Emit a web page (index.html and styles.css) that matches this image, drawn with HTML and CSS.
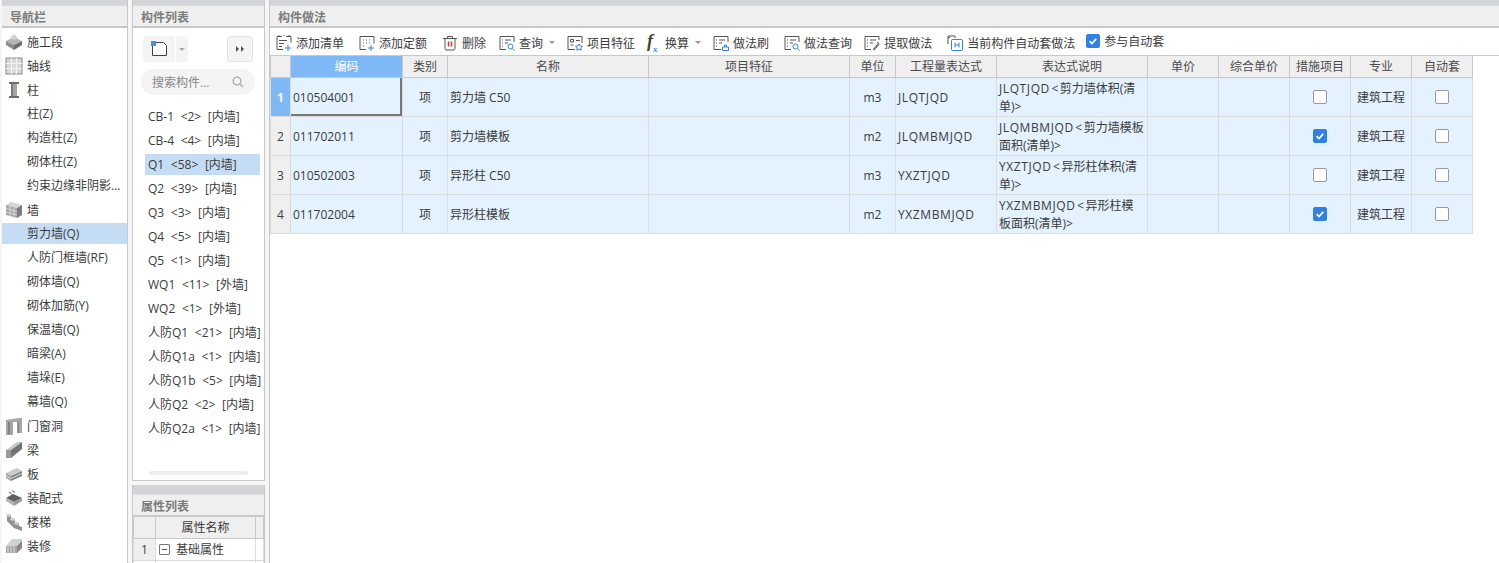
FILE: index.html
```html
<!DOCTYPE html>
<html lang="zh-CN">
<head>
  <meta charset="UTF-8" />
  <title>构件做法</title>
  <link rel="stylesheet" href="styles.css">
</head>
<body>
  <div class="app">
    <!-- 导航栏 -->
    <section class="panel nav">
      <div class="strip"></div>
      <div class="panel-title">导航栏</div>
      <ul class="nav-list">
        <li class="nav-item"><svg class="nav-icon" viewBox="0 0 18 18"><path d="M1 8l8-4 8 4-8 4z" fill="#b5b5b5"/><path d="M1 8v4l8 5v-5z" fill="#8c8c8c"/><path d="M17 8v4l-8 5v-5z" fill="#6f6f6f"/><path d="M5 5l4-4 4 4-4 2z" fill="#d0d0d0"/></svg>施工段</li>
        <li class="nav-item"><svg class="nav-icon" viewBox="0 0 18 18"><rect x="1" y="1" width="16" height="16" fill="#d8d8d8" stroke="#8a8a8a"/><path d="M6.500 1v16M11.500 1v16M1 6.500h16M1 11.500h16" stroke="#f4f4f4" stroke-width="1.200"/></svg>轴线</li>
        <li class="nav-item"><svg class="nav-icon" viewBox="0 0 18 18"><path d="M4 1h10v2h-10zM4 15h10v2h-10z" fill="#6e6e6e"/><path d="M6 3h6v12h-6z" fill="#a5a5a5"/><path d="M6 3h2v12h-2z" fill="#7b7b7b"/></svg>柱</li>
        <li class="nav-item sub">柱(Z)</li>
        <li class="nav-item sub">构造柱(Z)</li>
        <li class="nav-item sub">砌体柱(Z)</li>
        <li class="nav-item sub">约束边缘非阴影...</li>
        <li class="nav-item"><svg class="nav-icon" viewBox="0 0 18 18"><path d="M1 4l5-3 11 3-5 3z" fill="#d6d6d6"/><path d="M1 4l11 3v10l-11-3z" fill="#a8a8a8"/><path d="M12 7l5-3v10l-5 3z" fill="#7d7d7d"/><path d="M1 7.500l11 3M1 11l11 3M5 5v10M9 6.500v10" stroke="#dedede" stroke-width=".8"/></svg>墙</li>
        <li class="nav-item sub active">剪力墙(Q)</li>
        <li class="nav-item sub">人防门框墙(RF)</li>
        <li class="nav-item sub">砌体墙(Q)</li>
        <li class="nav-item sub">砌体加筋(Y)</li>
        <li class="nav-item sub">保温墙(Q)</li>
        <li class="nav-item sub">暗梁(A)</li>
        <li class="nav-item sub">墙垛(E)</li>
        <li class="nav-item sub">幕墙(Q)</li>
        <li class="nav-item"><svg class="nav-icon" viewBox="0 0 18 18"><path d="M1 3l13-2h3v15h-4v-11h-5v13h-7z" fill="#a6a6a6"/><path d="M4 5v12M13 5v11" stroke="#787878" stroke-width="1.500"/></svg>门窗洞</li>
        <li class="nav-item"><svg class="nav-icon" viewBox="0 0 18 18"><path d="M1 9l11-8h5l-11 8z" fill="#c9c9c9"/><path d="M1 9h5v8h-5z" fill="#9a9a9a"/><path d="M6 9l11-8v7l-11 9z" fill="#737373"/></svg>梁</li>
        <li class="nav-item"><svg class="nav-icon" viewBox="0 0 18 18"><path d="M1 8l11-5 5 3-11 5z" fill="#cbcbcb"/><path d="M1 8l5 3v5l-5-3z" fill="#a0a0a0"/><path d="M6 11l11-5v5l-11 5z" fill="#808080"/><path d="M1 10.500l5 3 11-5" stroke="#e2e2e2" fill="none"/></svg>板</li>
        <li class="nav-item"><svg class="nav-icon" viewBox="0 0 18 18"><path d="M1 9l7-4 9 4-8 4z" fill="#5f5f5f"/><path d="M1 9v3l8 5v-4z" fill="#b4b4b4"/><path d="M17 9v3l-8 5v-4z" fill="#9a9a9a"/><path d="M4 3l3 2M7 1.500l3 2" stroke="#8a8a8a" stroke-width="1.200"/></svg>装配式</li>
        <li class="nav-item"><svg class="nav-icon" viewBox="0 0 18 18"><path d="M2 1l4 1v3l4 1v3l4 1v3l3 1v4l-8-3-7-7z" fill="#929292"/><path d="M2 1l4 1-1 2-4-1zM6 5l4 1-1 2-4-1zM10 9l4 1-1 2-4-1z" fill="#d4d4d4"/></svg>楼梯</li>
        <li class="nav-item"><svg class="nav-icon" viewBox="0 0 18 18"><path d="M1 9l6-7h10v7z" fill="#d2d2d2"/><path d="M1 9h11v7h-11z" fill="#a3a3a3"/><path d="M12 9l5-5v7l-5 5z" fill="#868686"/><path d="M3 9v7M6 9v7M9 9v7" stroke="#dcdcdc"/></svg>装修</li>
      </ul>
    </section>

    <div class="middle">
      <!-- 构件列表 -->
      <section class="panel comp">
        <div class="strip"></div>
        <div class="panel-title">构件列表</div>
        <div class="comp-tools">
          <div class="new-btn">
            <span class="new-main"><svg width="16" height="16" viewBox="0 0 16 16"><path d="M1.500 4v10.500h14v-10l-3-3h-8" fill="#fff" stroke="#444"/><rect x="0" y="0" width="5" height="5" fill="#4a8fe0"/></svg></span>
            <span class="new-caret"></span>
          </div>
          <span class="more-btn"><i></i><i></i></span>
        </div>
        <div class="search">
          <span>搜索构件...</span>
          <svg width="12" height="12" viewBox="0 0 12 12"><circle cx="5" cy="5" r="3.800" fill="none" stroke="#aaa" stroke-width="1.300"/><path d="M8 8l3 3" stroke="#aaa" stroke-width="1.300"/></svg>
        </div>
        <ul class="comp-list">
          <li>CB-1 &lt;2&gt; [内墙]</li>
          <li>CB-4 &lt;4&gt; [内墙]</li>
          <li class="active">Q1 &lt;58&gt; [内墙]</li>
          <li>Q2 &lt;39&gt; [内墙]</li>
          <li>Q3 &lt;3&gt; [内墙]</li>
          <li>Q4 &lt;5&gt; [内墙]</li>
          <li>Q5 &lt;1&gt; [内墙]</li>
          <li>WQ1 &lt;11&gt; [外墙]</li>
          <li>WQ2 &lt;1&gt; [外墙]</li>
          <li>人防Q1 &lt;21&gt; [内墙]</li>
          <li>人防Q1a &lt;1&gt; [内墙]</li>
          <li>人防Q1b &lt;5&gt; [内墙]</li>
          <li>人防Q2 &lt;2&gt; [内墙]</li>
          <li>人防Q2a &lt;1&gt; [内墙]</li>
        </ul>
        <div class="scroll-h"></div>
      </section>

      <!-- 属性列表 -->
      <section class="panel props">
        <div class="strip"></div>
        <div class="panel-title">属性列表</div>
        <table class="prop-table">
          <colgroup><col class="p-num"><col class="p-name"><col></colgroup>
          <thead><tr><th></th><th>属性名称</th><th></th></tr></thead>
          <tbody>
            <tr><td class="p-index">1</td><td><span class="minus"></span>基础属性</td><td></td></tr>
            <tr><td></td><td></td><td></td></tr>
          </tbody>
        </table>
      </section>
    </div>

    <!-- 构件做法 -->
    <section class="panel work">
      <div class="strip"></div>
      <div class="panel-title">构件做法</div>
      <div class="toolbar">
        <span class="tool"><svg class="tool-icon" viewBox="0 0 16 16"><path d="M6 1.500h-5v13h6M10 1.500h5v6" class="ln"/><path d="M3 1v-1M8 1v-1M13 1v-1M3 5.500h8M3 8.500h5M3 11.500h3" class="ln"/><path d="M12 10v6M9 13h6" class="bl"/></svg>添加清单</span>
        <span class="tool"><svg class="tool-icon" viewBox="0 0 16 16"><path d="M7 14.500h-6v-13h14v7" class="ln"/><path d="M4 5h1M7 5h1M10 5h1M4 8h1M7 8h1M10 8h1M4 11h1" class="ln"/><path d="M12 10v6M9 13h6" class="bl"/></svg>添加定额</span>
        <span class="tool"><svg class="tool-icon" viewBox="0 0 16 16"><path d="M1 3.500h14M5.500 3.500v-2h5v2M3 3.500v10l1 1.500h8l1-1.500v-10" class="ln"/><path d="M6.500 6.500v5M9.500 6.500v5" class="rd"/></svg>删除</span>
        <span class="tool query"><svg class="tool-icon" viewBox="0 0 16 16"><path d="M15 7v-5.500h-14v13h6" class="ln"/><path d="M3 5h1M6 5h6M3 8h1M6 8h3M3 11h1" class="ln"/><circle cx="11.500" cy="11.500" r="2.500" class="bl"/><path d="M13.500 13.500l2 2" class="bl"/></svg>查询<i class="caret"></i></span>
        <span class="tool narrow"><svg class="tool-icon" viewBox="0 0 16 16"><path d="M15 8v-6.500h-14v13h7" class="ln"/><path d="M3.500 4.500h3v2.500h-3zM3.500 10h3M9 5.500h4" class="ln"/><path d="M12 9l1.200 2 2.300.3-1.700 1.600.4 2.300-2.200-1.100-2.200 1.100.4-2.300-1.700-1.600 2.300-.3z" class="bl"/></svg>项目特征</span>
        <span class="tool narrow"><span class="fx-icon">f<sub>x</sub></span>换算<i class="caret"></i></span>
        <span class="tool narrow"><svg class="tool-icon" viewBox="0 0 16 16"><path d="M15 7v-5.500h-14v13h7" class="ln"/><path d="M3 5h1M6 5h6M3 8h1M6 8h3M3 11h1" class="ln"/><path d="M9.500 15.500v-3.500h6v3.500zM11.500 12v-2h2v2" class="bl"/></svg>做法刷</span>
        <span class="tool"><svg class="tool-icon" viewBox="0 0 16 16"><path d="M15 7v-5.500h-14v13h6" class="ln"/><path d="M3 5h1M6 5h6M3 8h1M6 8h3M3 11h1" class="ln"/><circle cx="11.500" cy="11.500" r="2.500" class="bl"/><path d="M13.500 13.500l2 2" class="bl"/></svg>做法查询</span>
        <span class="tool narrow"><svg class="tool-icon" viewBox="0 0 16 16"><path d="M15 5v-3.500h-14v13h6" class="ln"/><path d="M3 5h1M6 5h6M3 8h1M6 8h3M3 11h1" class="ln"/><path d="M9.500 15l5-6" stroke="#777" stroke-width="2"/><path d="M13 7l2.500 2" class="ln"/></svg>提取做法</span>
        <span class="tool"><svg class="tool-icon" viewBox="0 0 16 16"><path d="M1 9v-6.500h2M1 2.500v-1.500h7v2" class="ln"/><rect x="4.500" y="4.500" width="11" height="11" rx="1" class="bl"/><path d="M8 7.500v5M12 7.500v5M8 10h4" class="bl"/></svg>当前构件自动套做法</span>
        <label class="tool auto"><span class="check on"><svg viewBox="0 0 14 14"><path d="M3 7.200l2.800 2.800 5-5.500" fill="none" stroke="#fff" stroke-width="2"/></svg></span>参与自动套</label>
      </div>
      <table class="grid">
        <colgroup>
          <col class="c-num"><col class="c-code"><col class="c-type"><col class="c-name"><col class="c-feat">
          <col class="c-unit"><col class="c-expr"><col class="c-desc"><col class="c-price"><col class="c-price">
          <col class="c-flag"><col class="c-flag"><col class="c-flag">
        </colgroup>
        <thead>
          <tr>
            <th></th><th class="sel">编码</th><th>类别</th><th>名称</th><th>项目特征</th><th>单位</th><th>工程量表达式</th>
            <th>表达式说明</th><th>单价</th><th>综合单价</th><th>措施项目</th><th>专业</th><th>自动套</th>
          </tr>
        </thead>
        <tbody>
          <tr>
            <td class="num sel">1</td><td class="current">010504001</td><td class="mid">项</td><td>剪力墙 C50</td><td></td><td class="mid">m3</td><td><span class="code">JLQTJQD</span></td>
            <td><span class="code">JLQTJQD</span><span class="lt">&lt;</span>剪力墙体积(清<br>单)&gt;</td><td></td><td></td><td class="mid"><span class="check"></span></td><td class="mid">建筑工程</td><td class="mid"><span class="check"></span></td>
          </tr>
          <tr>
            <td class="num">2</td><td>011702011</td><td class="mid">项</td><td>剪力墙模板</td><td></td><td class="mid">m2</td><td><span class="code">JLQMBMJQD</span></td>
            <td><span class="code">JLQMBMJQD</span><span class="lt">&lt;</span>剪力墙模板<br>面积(清单)&gt;</td><td></td><td></td><td class="mid"><span class="check on"><svg viewBox="0 0 14 14"><path d="M3 7.200l2.800 2.800 5-5.500" fill="none" stroke="#fff" stroke-width="2"/></svg></span></td><td class="mid">建筑工程</td><td class="mid"><span class="check"></span></td>
          </tr>
          <tr>
            <td class="num">3</td><td>010502003</td><td class="mid">项</td><td>异形柱 C50</td><td></td><td class="mid">m3</td><td><span class="code">YXZTJQD</span></td>
            <td><span class="code">YXZTJQD</span><span class="lt">&lt;</span>异形柱体积(清<br>单)&gt;</td><td></td><td></td><td class="mid"><span class="check"></span></td><td class="mid">建筑工程</td><td class="mid"><span class="check"></span></td>
          </tr>
          <tr>
            <td class="num">4</td><td>011702004</td><td class="mid">项</td><td>异形柱模板</td><td></td><td class="mid">m2</td><td><span class="code">YXZMBMJQD</span></td>
            <td><span class="code">YXZMBMJQD</span><span class="lt">&lt;</span>异形柱模<br>板面积(清单)&gt;</td><td></td><td></td><td class="mid"><span class="check on"><svg viewBox="0 0 14 14"><path d="M3 7.200l2.800 2.800 5-5.500" fill="none" stroke="#fff" stroke-width="2"/></svg></span></td><td class="mid">建筑工程</td><td class="mid"><span class="check"></span></td>
          </tr>
        </tbody>
      </table>
    </section>
  </div>
</body>
</html>
```

FILE: styles.css
```css
:root {
  --strip: #d3d4d8;
  --title: #efefef;
  --line: #c8c8c8;
  --cell: #dcdcdc;
  --row: #e3f2fe;
  --selected: #c5dcf5;
  --blue: #7eb8f7;
  --check: #2f80e7;
  --text: #3c3c3c;
}

* {
  box-sizing: border-box;
}

html, body {
  height: 100%;
}

body {
  margin: 0;
  background: #f6f6f6;
  color: var(--text);
  font-family: "Open Sans", "Noto Sans CJK SC", sans-serif;
  font-size: 12px;
  overflow: hidden;
}

ul {
  list-style: none;
  margin: 0;
  padding: 0;
}

.app {
  display: flex;
  height: 563px;
  padding-left: 2px;
}

.panel {
  background: #fff;
  display: flex;
  flex-direction: column;
  overflow: hidden;
}

.strip {
  flex: none;
  height: 5px;
  background: var(--strip);
}

.panel-title {
  flex: none;
  height: 23px;
  line-height: 23px;
  padding-left: 8px;
  background: var(--title);
  border-top: 1px solid #dcdcdc;
  border-bottom: 2px solid var(--line);
  color: #7c7c7c;
  font-weight: 700;
}

/* 导航栏 */
.nav {
  width: 126px;
  border-right: 1px solid var(--line);
}

.nav-list {
  padding-top: 3px;
}

.nav-item {
  display: flex;
  align-items: center;
  height: 21px;
  margin-bottom: 3px;
  padding-left: 3px;
  font-size: 12px;
  white-space: nowrap;
}

.nav-item.sub {
  padding: 0 0 2px 25px;
}

.nav-item.active {
  background: var(--selected);
}

.nav-icon {
  width: 18px;
  height: 18px;
  margin-right: 4px;
  flex: none;
}

/* 中间一列 */
.middle {
  width: 133px;
  margin-left: 4px;
  display: flex;
  flex-direction: column;
  gap: 4px;
}

.comp {
  flex: none;
  height: 481px;
  border-left: 1px solid var(--line);
  border-right: 1px solid var(--line);
  border-bottom: 1px solid var(--line);
}

.comp-tools {
  flex: none;
  display: flex;
  justify-content: space-between;
  padding: 8px 11px 0 10px;
  height: 34px;
}

.new-btn {
  display: flex;
  height: 26px;
  gap: 1px;
}

.new-main {
  width: 32px;
  background: #f4f4f4;
  border-radius: 4px 0 0 4px;
  display: flex;
  align-items: center;
  justify-content: center;
}

.new-caret {
  width: 12px;
  background: #f4f4f4;
  border-radius: 0 4px 4px 0;
  position: relative;
}

.new-caret::after {
  content: "";
  position: absolute;
  left: 3px;
  top: 12px;
  border: 3px solid transparent;
  border-top: 3px solid #aaa;
}

.more-btn {
  width: 26px;
  height: 26px;
  background: #f4f4f4;
  border: 1px solid #e2e2e2;
  border-radius: 4px;
  display: flex;
  align-items: center;
  justify-content: center;
  gap: 2px;
}

.more-btn i {
  border-left: 3px solid #555;
  border-top: 3px solid transparent;
  border-bottom: 3px solid transparent;
}

.search {
  flex: none;
  margin: 7px 9px 0 8px;
  height: 26px;
  background: #f4f4f4;
  border-radius: 13px;
  display: flex;
  align-items: center;
  justify-content: space-between;
  padding: 0 11px;
  color: #888;
}

.comp-list {
  flex: 1;
  margin-top: 11px;
  padding-left: 12px;
  overflow: hidden;
}

.comp-list li {
  height: 21px;
  line-height: 21px;
  margin-bottom: 3px;
  padding-left: 3px;
  white-space: pre;
  word-spacing: 3.500px;
  overflow: hidden;
}

.comp-list li.active {
  background: var(--selected);
  width: 115px;
}

.scroll-h {
  flex: none;
  width: 99px;
  height: 4px;
  margin: 0 0 5px 16px;
  background: #eeeeee;
  border-radius: 2px;
}

.props {
  flex: 1;
  border-left: 1px solid var(--line);
  border-right: 1px solid var(--line);
}

.props .strip {
  height: 9px;
}

.prop-table {
  width: 100%;
  table-layout: fixed;
  border-collapse: collapse;
}

.p-num {
  width: 22px;
}

.p-name {
  width: 100px;
}

.prop-table th {
  height: 21px;
  background: var(--title);
  border: 1px solid var(--line);
  border-top: 0;
  font-weight: 400;
  padding: 0;
}

.prop-table td {
  height: 22px;
  border: 1px solid var(--cell);
  padding: 0 0 0 3px;
  white-space: nowrap;
}

.p-index {
  background: var(--title);
  text-align: center;
}

td.p-index {
  padding: 0;
}

.minus {
  display: inline-block;
  width: 11px;
  height: 11px;
  margin: 0 6px 0 0;
  border: 1px solid #777;
  border-radius: 1px;
  vertical-align: -1px;
  position: relative;
}

.minus::after {
  content: "";
  position: absolute;
  left: 2px;
  top: 4px;
  width: 5px;
  height: 1px;
  background: #555;
}

/* 构件做法 */
.work {
  flex: 1;
  margin-left: 4px;
  border-left: 1px solid var(--line);
}

.toolbar {
  flex: none;
  height: 28px;
  display: flex;
  align-items: center;
  gap: 15px;
  padding: 2px 0 0 6px;
  border-bottom: 1px solid var(--line);
  white-space: nowrap;
}

.tool {
  display: flex;
  align-items: center;
  gap: 4px;
}

.tool.narrow {
  margin-left: -3px;
}

.tool.query {
  margin-left: -2px;
}

.tool-icon {
  width: 16px;
  height: 16px;
  flex: none;
}

.ln,
.bl,
.rd {
  fill: none;
  stroke-width: 1;
}

.ln {
  stroke: #555;
}

.bl {
  stroke: #2f80e7;
}

.rd {
  stroke: #d9342b;
  stroke-width: 1.500;
}

.caret {
  border: 3px solid transparent;
  border-top: 3px solid #999;
  margin: 3px 0 0 2px;
}

.fx-icon {
  width: 16px;
  font-family: "Liberation Serif", serif;
  font-size: 18px;
  font-style: italic;
  font-weight: 700;
  line-height: 16px;
  color: #444;
  margin: -4px -2px 0 0;
}

.fx-icon sub {
  font-size: 9px;
  color: var(--check);
  line-height: 0;
}

.auto {
  margin: -4px 0 0 -4px;
}

.check {
  display: inline-block;
  width: 14px;
  height: 14px;
  background: #fff;
  border: 1px solid #999;
  border-radius: 2px;
  vertical-align: middle;
}

.check.on {
  background: var(--check);
  border-color: var(--check);
}

.check svg {
  display: block;
  width: 12px;
  height: 12px;
}

.grid {
  width: 1203px;
  table-layout: fixed;
  border-collapse: collapse;
}

.c-num { width: 20px; }
.c-code { width: 112px; }
.c-type { width: 45px; }
.c-name { width: 201px; }
.c-feat { width: 201px; }
.c-unit { width: 46px; }
.c-expr { width: 101px; }
.c-desc { width: 151px; }
.c-price { width: 71px; }
.c-flag { width: 61px; }

.grid th {
  height: 21px;
  padding: 0;
  background: var(--title);
  border: 1px solid var(--line);
  border-top: 0;
  font-weight: 400;
  color: #4c4c4c;
}

.grid th.sel {
  background: var(--blue);
  color: #fff;
}

.grid td {
  height: 39px;
  padding: 2px 2px 0;
  background: var(--row);
  border: 1px solid var(--cell);
  line-height: 18px;
  white-space: nowrap;
  overflow: hidden;
}

.grid td.mid {
  text-align: center;
}

.grid td .check {
  display: block;
  margin: -2px auto 0;
}

.grid td.num {
  background: var(--title);
  text-align: center;
  padding: 2px 0 0;
}

.grid td.num.sel {
  background: var(--blue);
  color: #fff;
  font-weight: 700;
}

.grid td.current {
  box-shadow: inset -2px -2px 0 #777;
}

.code {
  letter-spacing: .6px;
}

.lt {
  padding: 0 1.500px;
}
```
